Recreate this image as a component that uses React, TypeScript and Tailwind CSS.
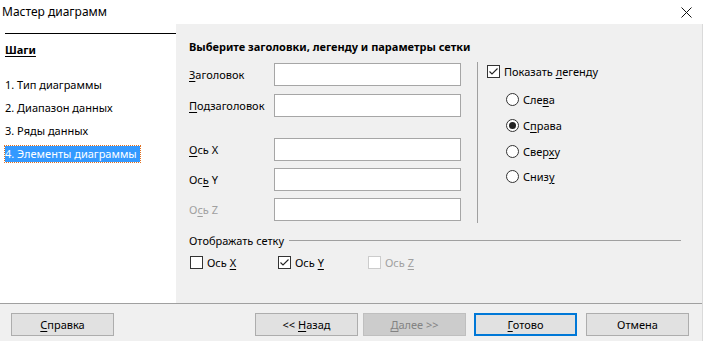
import React from 'react';

const FONT = 'font-["Noto_Sans","Open_Sans",sans-serif]';

const U: React.FC<{ children: React.ReactNode }> = ({ children }) => (
  <span className="underline underline-offset-2 decoration-1">{children}</span>
);

const Checkbox: React.FC<{ checked?: boolean; disabled?: boolean }> = ({ checked = false, disabled = false }) => (
  <span
    className={`flex h-[13px] w-[13px] shrink-0 items-center justify-center border bg-white ${
      disabled ? 'border-[#cccccc]' : 'border-[#333333]'
    }`}
  >
    {checked && (
      <svg width="11" height="11" viewBox="0 0 11 11" fill="none">
        <path d="M1.5 5.5 L4 8 L9.5 2.5" stroke="#222" strokeWidth="1.1" />
      </svg>
    )}
  </span>
);

const Radio: React.FC<{ checked?: boolean }> = ({ checked = false }) => (
  <span className="flex h-[13px] w-[13px] shrink-0 items-center justify-center rounded-full border border-[#333333] bg-white">
    {checked && <span className="h-[7px] w-[7px] rounded-full bg-[#222222]" />}
  </span>
);

const Field: React.FC<{ label: React.ReactNode; disabled?: boolean }> = ({ label, disabled = false }) => (
  <div className="flex h-[23px] items-center">
    <span className={`w-[85px] ${disabled ? 'text-[#a0a0a0]' : 'text-black'}`}>{label}</span>
    <div className="h-[23px] w-[187px] border border-[#a6a6a6] bg-white" />
  </div>
);

const Btn: React.FC<{ children: React.ReactNode; className?: string; primary?: boolean; disabled?: boolean }> = ({
  children,
  className = '',
  primary = false,
  disabled = false,
}) => (
  <div
    className={`flex h-[23px] w-[103px] items-center justify-center ${
      primary
        ? 'border-2 border-[#0078d7] bg-[#e1e1e1] text-black'
        : disabled
        ? 'border border-[#bfbfbf] bg-[#cccccc] text-[#838383]'
        : 'border border-[#adadad] bg-[#e1e1e1] text-black'
    } ${className}`}
  >
    {children}
  </div>
);

export default function App() {
  return (
    <div className={`${FONT} relative h-[341px] w-[703px] overflow-hidden bg-white text-[11px] leading-none text-black`}>
      {/* title bar */}
      <div className="flex h-[24px] items-center justify-between pl-[2px] pr-[11px]">
        <span className="text-[12px]">Мастер диаграмм</span>
        <svg width="11" height="11" viewBox="0 0 11 11">
          <path d="M0.5 0.5 L10.5 10.5 M10.5 0.5 L0.5 10.5" stroke="#111" strokeWidth="1" />
        </svg>
      </div>

      <div className="flex h-[279px]">
        {/* steps */}
        <div className="w-[176px] bg-white pl-[5px]">
          <div className="mt-[9px] h-px bg-black" />
          <div className="mt-[9px] flex h-[12px] items-center font-bold">
            <U>Шаги</U>
          </div>
          <div className="mt-[18px] flex flex-col">
            <div className="flex h-[23px] items-center">1. Тип диаграммы</div>
            <div className="flex h-[23px] items-center">2. Диапазон данных</div>
            <div className="flex h-[23px] items-center">3. Ряды данных</div>
            <div className="flex h-[23px] items-center">
              <span className="flex h-[16px] items-center bg-[#3399ff] pr-[3px] text-white outline-1 outline-dotted outline-[#e07020]">
                4. Элементы диаграммы
              </span>
            </div>
          </div>
        </div>

        {/* content */}
        <div className="flex-1 bg-[#f0f0f0] pl-[13px] pr-[22px]">
          <div className="mt-[17px] h-[12px] font-bold">Выберите заголовки, легенду и параметры сетки</div>
          <div className="mt-[10px] flex">
            <div className="flex flex-col">
              <Field label={<><U>З</U>аголовок</>} />
              <div className="h-[8px]" />
              <Field label={<><U>П</U>одзаголовок</>} />
              <div className="h-[21px]" />
              <Field label={<><U>О</U>сь X</>} />
              <div className="h-[7px]" />
              <Field label={<>Ос<U>ь</U> Y</>} />
              <div className="h-[7px]" />
              <Field label={<>О<U>с</U>ь Z</>} disabled />
            </div>
            <div className="ml-[16px] mt-[-1px] h-[161px] w-px bg-[#a0a0a0]" />
            <div className="flex flex-col pl-[9px]">
              <div className="mt-[2px] flex items-center gap-[4px]">
                <Checkbox checked />
                <span>
                  Показать <U>л</U>егенду
                </span>
              </div>
              <div className="ml-[19px] mt-[15px] flex flex-col">
                <div className="flex h-[13px] items-center gap-[4px]">
                  <Radio />
                  <span>
                    Сле<U>в</U>а
                  </span>
                </div>
                <div className="mt-[13px] flex h-[13px] items-center gap-[4px]">
                  <Radio checked />
                  <span>
                    С<U>п</U>рава
                  </span>
                </div>
                <div className="mt-[13px] flex h-[13px] items-center gap-[4px]">
                  <Radio />
                  <span>
                    Свер<U>х</U>у
                  </span>
                </div>
                <div className="mt-[12px] flex h-[13px] items-center gap-[4px]">
                  <Radio />
                  <span>
                    Сниз<U>у</U>
                  </span>
                </div>
              </div>
            </div>
          </div>

          <div className="mt-[11px] flex h-[12px] items-center">
            <span>Отображать сетку</span>
            <div className="ml-[5px] h-px flex-1 bg-[#a0a0a0]" />
          </div>
          <div className="mt-[10px] flex h-[13px] items-center">
            <div className="flex w-[89px] items-center gap-[4px] pl-px">
              <Checkbox />
              <span>
                Ось <U>X</U>
              </span>
            </div>
            <div className="flex w-[90px] items-center gap-[4px]">
              <Checkbox checked />
              <span>
                Ось <U>Y</U>
              </span>
            </div>
            <div className="flex items-center gap-[4px] text-[#a0a0a0]">
              <Checkbox disabled />
              <span>
                Ось <U>Z</U>
              </span>
            </div>
          </div>
        </div>
      </div>

      {/* footer */}
      <div className="flex h-[38px] items-start border-t border-[#a0a0a0] bg-[#f0f0f0] pt-[9px]">
        <Btn className="ml-[11px]">
          <span>
            <U>С</U>правка
          </span>
        </Btn>
        <Btn className="ml-[141px]">
          <span>
            &lt;&lt; <U>Н</U>азад
          </span>
        </Btn>
        <Btn className="ml-[5px]" disabled>
          <span>
            <U>Д</U>алее &gt;&gt;
          </span>
        </Btn>
        <Btn className="ml-[8px]" primary>
          <span>
            <U>Г</U>отово
          </span>
        </Btn>
        <Btn className="ml-[9px]">Отмена</Btn>
      </div>
      <div className="absolute right-0 top-[24px] h-[317px] w-px bg-[#dadada]" />
    </div>
  );
}
